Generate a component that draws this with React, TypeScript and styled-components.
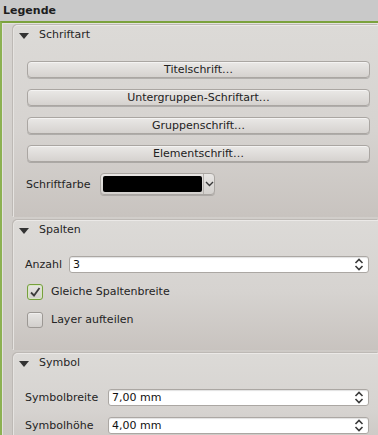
import { ReactNode } from 'react'
import styled, { createGlobalStyle } from 'styled-components'

const GlobalStyle = createGlobalStyle`
  html, body {
    margin: 0;
    padding: 0;
    background: #d2cfcb;
  }
`

interface ILabelCol {
  labelWidth: number
}
interface ICheck {
  checked?: boolean
}

const SpinArrows = () => (
  <svg width="10" height="13" viewBox="0 0 10 13">
    <path d="M1.5 5 L5 1.5 L8.5 5" fill="none" stroke="#3a3a3a" strokeWidth="1.6" />
    <path d="M1.5 8 L5 11.5 L8.5 8" fill="none" stroke="#3a3a3a" strokeWidth="1.6" />
  </svg>
)

const DownChevron = () => (
  <svg width="9" height="6" viewBox="0 0 9 6">
    <path d="M1 1 L4.5 4.5 L8 1" fill="none" stroke="#3a3a3a" strokeWidth="1.4" />
  </svg>
)

const CheckMark = () => (
  <svg width="12" height="12" viewBox="0 0 12 12">
    <path d="M2 6.5 L5 9.5 L10.5 2" fill="none" stroke="#3c3c3c" strokeWidth="1.8" />
  </svg>
)

function GroupBox({ title, children }: { title: string; children: ReactNode }) {
  return (
    <Box>
      <BoxTitle>
        <Triangle />
        <span>{title}</span>
      </BoxTitle>
      <BoxContent>{children}</BoxContent>
    </Box>
  )
}

function SpinField({ value }: { value: string }) {
  return (
    <Field>
      <FieldText>{value}</FieldText>
      <SpinArrows />
    </Field>
  )
}

function CheckRow({ label, checked }: { label: string; checked?: boolean }) {
  return (
    <CheckLine>
      <CheckBox checked={checked}>{checked && <CheckMark />}</CheckBox>
      <span>{label}</span>
    </CheckLine>
  )
}

export default function App() {
  const fontButtons = [
    'Titelschrift...',
    'Untergruppen-Schriftart...',
    'Gruppenschrift...',
    'Elementschrift...',
  ]
  return (
    <Window>
      <GlobalStyle />
      <Header>Legende</Header>
      <Frame>
        <GroupBox title="Schriftart">
          <ButtonStack>
            {fontButtons.map((text) => (
              <PushButton key={text}>{text.replace('...', '…')}</PushButton>
            ))}
          </ButtonStack>
          <FormRow labelWidth={74} style={{ marginTop: 11 }}>
            <Label>Schriftfarbe</Label>
            <ColorButton>
              <Swatch />
              <ColorArrow>
                <DownChevron />
              </ColorArrow>
            </ColorButton>
          </FormRow>
        </GroupBox>
        <GroupBox title="Spalten">
          <FormRow labelWidth={44} style={{ marginLeft: -1 }}>
            <Label>Anzahl</Label>
            <SpinField value="3" />
          </FormRow>
          <CheckList>
            <CheckRow label="Gleiche Spaltenbreite" checked />
            <CheckRow label="Layer aufteilen" />
          </CheckList>
        </GroupBox>
        <GroupBox title="Symbol">
          <FieldStack>
            <FormRow labelWidth={83} style={{ marginLeft: -1 }}>
              <Label>Symbolbreite</Label>
              <SpinField value="7,00 mm" />
            </FormRow>
            <FormRow labelWidth={83} style={{ marginLeft: -1 }}>
              <Label>Symbolhöhe</Label>
              <SpinField value="4,00 mm" />
            </FormRow>
          </FieldStack>
        </GroupBox>
      </Frame>
    </Window>
  )
}

const Window = styled.div`
  width: 378px;
  height: 435px;
  overflow: hidden;
  display: flex;
  flex-direction: column;
  background: #d2cfcb;
  font-family: 'DejaVu Sans', 'Liberation Sans', sans-serif;
  font-size: 11px;
  color: #242424;
`
const Header = styled.div`
  height: 21px;
  line-height: 21px;
  padding-left: 3px;
  background: #c9c9c9;
  font-weight: bold;
  color: #1e1e1e;
`
const Frame = styled.div`
  flex: 1;
  border-top: 2px solid #7ba23d;
  border-left: 2px solid #8cb152;
  box-shadow: inset 1px 1px 0 #e4e2df;
  padding: 2px 0 0 11px;
  display: flex;
  flex-direction: column;
  gap: 3px;
  background: linear-gradient(#d6d3d0, #cbc7c3);
`
const Box = styled.div`
  border-top: 1px solid #ebe9e7;
  border-left: 1px solid #e6e4e1;
  border-top-left-radius: 5px;
  box-shadow: -1px -1px 0 #bdb9b5;
  background: linear-gradient(#dcdad7 0%, #d6d3d0 55%, #c8c3bf 100%);
  padding-bottom: 22px;
`
const BoxTitle = styled.div`
  height: 17px;
  display: flex;
  align-items: center;
  gap: 10px;
  padding-left: 5px;
  color: #262626;
`
const Triangle = styled.div`
  width: 0;
  height: 0;
  border-left: 5px solid transparent;
  border-right: 5px solid transparent;
  border-top: 6px solid #333;
  margin-top: 2px;
`
const BoxContent = styled.div`
  margin-top: 18px;
  padding: 0 9px 0 12px;
`
const ButtonStack = styled.div`
  display: flex;
  flex-direction: column;
  gap: 11px;
  margin: 0 -1px 0 1px;
`
const PushButton = styled.div`
  height: 15px;
  line-height: 15px;
  text-align: center;
  border: 1px solid #aaa6a2;
  border-radius: 4px;
  background: linear-gradient(#eae8e6, #d5d2cf);
  box-shadow: 0 1px 0 rgba(0, 0, 0, 0.18), inset 0 1px 0 #f4f3f2;
  color: #222;
`
const FormRow = styled.div<ILabelCol>`
  display: grid;
  grid-template-columns: ${(props) => props.labelWidth}px 1fr;
  align-items: center;
`
const Label = styled.span`
  color: #242424;
`
const ColorButton = styled.div`
  width: 113px;
  height: 20px;
  display: flex;
  align-items: center;
  border: 1px solid #aaa6a2;
  border-radius: 4px;
  background: linear-gradient(#e8e6e4, #d3d0cd);
  box-shadow: 0 1px 0 rgba(0, 0, 0, 0.15);
`
const Swatch = styled.div`
  width: 99px;
  height: 16px;
  margin-left: 2px;
  background: #000;
  border-radius: 2px;
`
const ColorArrow = styled.div`
  flex: 1;
  height: 100%;
  display: flex;
  align-items: center;
  justify-content: center;
  border-left: 1px solid #b4b0ac;
  margin-left: 1px;
`
const Field = styled.div`
  height: 15px;
  display: flex;
  align-items: center;
  justify-content: space-between;
  padding: 0 4px 0 3px;
  background: #fff;
  border: 1px solid #aba7a3;
  border-radius: 3px;
  box-shadow: inset 0 1px 1px rgba(0, 0, 0, 0.12);
`
const FieldText = styled.span`
  color: #111;
`
const CheckList = styled.div`
  display: flex;
  flex-direction: column;
  gap: 11px;
  margin-top: 10px;
`
const CheckLine = styled.div`
  display: flex;
  align-items: center;
  gap: 8px;
  margin-left: 1px;
  height: 17px;
`
const CheckBox = styled.div<ICheck>`
  width: 14px;
  height: 14px;
  display: flex;
  align-items: center;
  justify-content: center;
  border: 1px solid ${(props) => (props.checked ? '#76a03c' : '#9c9894')};
  border-radius: 3px;
  background: linear-gradient(#e7e5e3, #d2cfcc);
  box-shadow: ${(props) =>
    props.checked ? 'inset 0 0 0 1px #d9e6c6' : 'inset 0 1px 0 #f0efee'};
`
const FieldStack = styled.div`
  display: flex;
  flex-direction: column;
  gap: 11px;
`
